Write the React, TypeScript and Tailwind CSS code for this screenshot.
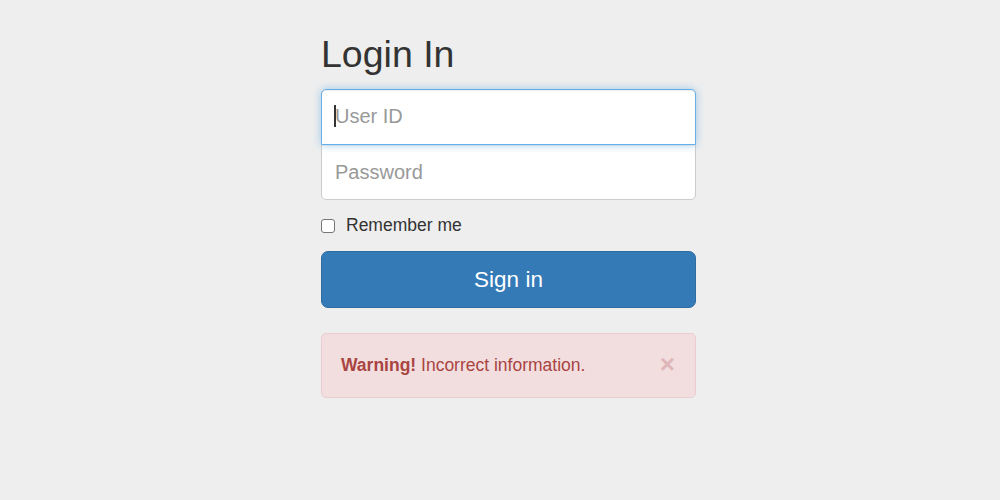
import React from "react";

export default function App() {
  return (
    <div className="min-h-[500px] bg-[#eeeeee] font-['Liberation_Sans',Arial,sans-serif] text-[#333333]">
      <form className="ml-[321px] w-[375px] pt-[34px]" onSubmit={(e) => e.preventDefault()}>
        <h2 className="mb-[14px] text-[37.5px] font-normal leading-[41.25px]">Login In</h2>

        {/* User ID (focused look) */}
        <div className="relative">
          <input
            type="text"
            placeholder="User ID"
            className="relative z-10 block h-[56px] w-full rounded-t-[5px] border border-[#66afe9] bg-white px-[13px] pb-[2px] text-[20px] text-[#555] shadow-[inset_0_1px_1px_rgba(0,0,0,0.075),0_0_8px_rgba(102,175,233,0.6)] outline-none placeholder:text-[#999]"
          />
          <span className="pointer-events-none absolute left-[13px] top-[16px] z-20 h-[22px] w-[1.5px] bg-[#333]" />
        </div>
        <input
          type="password"
          placeholder="Password"
          className="-mt-px block h-[56px] w-full rounded-b-[5px] border border-[#cccccc] bg-white px-[13px] text-[20px] text-[#555] shadow-[inset_0_1px_1px_rgba(0,0,0,0.075)] outline-none placeholder:text-[#999]"
        />

        <label className="mt-[13px] flex h-[25px] items-center gap-[11px] text-[17.5px] leading-[25px]">
          <input
            type="checkbox"
            className="h-[14px] w-[14px] appearance-none rounded-[3px] border border-[#767676] bg-white"
          />
          Remember me
        </label>

        <button
          type="submit"
          className="mt-[13px] block h-[57px] w-full rounded-[7px] border border-[#2e6da4] bg-[#337ab7] text-[22.5px] text-white"
        >
          Sign in
        </button>

        <div className="mt-[25px] flex h-[65px] items-center justify-between rounded-[5px] border border-[#ebccd1] bg-[#f2dede] pb-[2px] pl-[19px] pr-[20px] text-[17.5px] text-[#a94442]">
          <span>
            <strong className="font-bold">Warning!</strong> Incorrect information.
          </span>
          <span className="-mt-[2px] text-[26px] font-bold leading-none text-[#dfb6b9]">×</span>
        </div>
      </form>
    </div>
  );
}
